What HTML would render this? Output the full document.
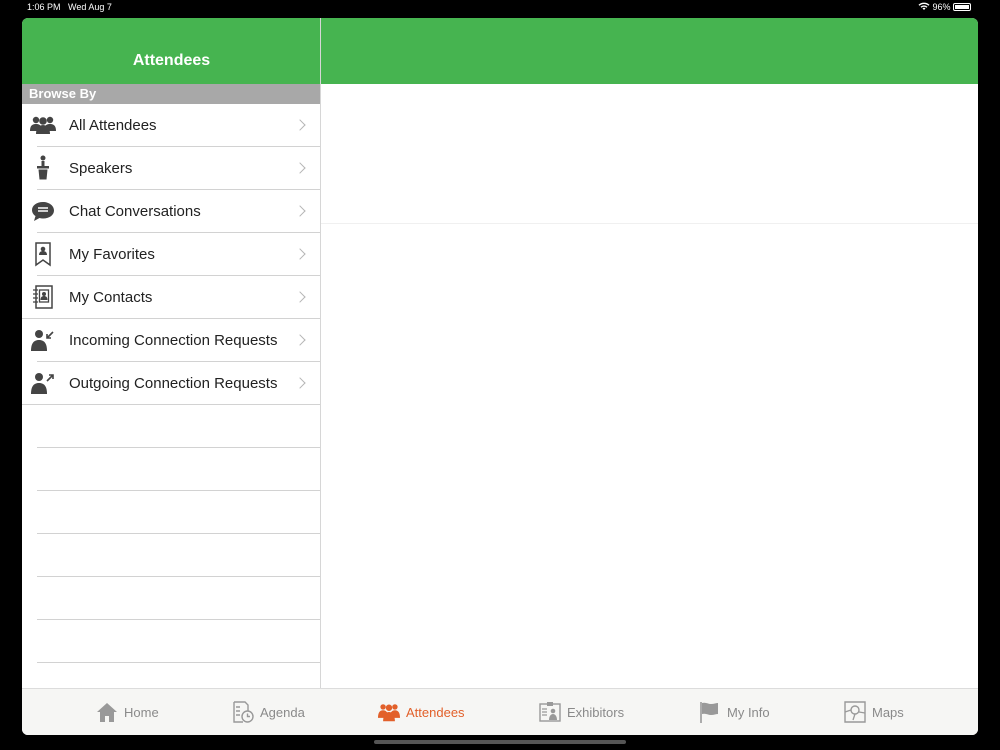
<!DOCTYPE html>
<html><head><meta charset="utf-8"><style>
*{margin:0;padding:0;box-sizing:border-box}
body{width:1000px;height:750px;background:#000;font-family:"Liberation Sans",sans-serif;position:relative;overflow:hidden}
.sb{position:absolute;top:2px;color:#fff;font-size:9px}
.frame{position:absolute;left:22px;top:18px;width:956px;height:717px;background:#fff;border-radius:6px;overflow:hidden}
.hdr{position:absolute;left:0;top:0;width:956px;height:66px;background:#46b450}
.hdr .t{position:absolute;left:0;width:299px;top:34px;text-align:center;color:#fff;font-size:16px;font-weight:bold}
.vdiv{position:absolute;left:298px;top:0;width:1px;height:670px;background:#d6d6d6}
.hvdiv{position:absolute;left:298px;top:0;width:1px;height:66px;background:#3fa048}
.browse{position:absolute;left:0;top:66px;width:298px;height:20px;background:#a8a8a8;color:#fff;font-size:13px;font-weight:bold;padding-left:7px;line-height:20px}
.row{position:absolute;left:0;width:298px;height:43px;font-size:15px;color:#222;font-weight:normal}
.row .l{position:absolute;left:47px;top:13px}
.row .ch{position:absolute;left:274px;top:17px;width:8px;height:8px;border-right:1.6px solid #b5b5b5;border-top:1.6px solid #b5b5b5;transform:rotate(45deg)}
.row .ic{position:absolute;left:8px;top:8px;width:26px;height:26px}
.sep{position:absolute;left:15px;width:283px;height:1px;background:#d2d2d2}
.tab{position:absolute;left:0;top:670px;width:956px;height:47px;background:#f6f6f4;border-top:1px solid #dcdcdc}
.ti{position:absolute;top:12px;font-size:13px;color:#8a8a8a;display:flex;align-items:center;gap:6px}
.ti svg{width:22px;height:22px}
.home{position:absolute;left:374px;top:740px;width:252px;height:4px;border-radius:2px;background:#555}
</style></head><body>
<div class="sb" style="left:27px">1:06 PM&nbsp;&nbsp; Wed Aug 7</div>
<div class="sb" style="left:918px">
<svg width="12" height="9" viewBox="0 0 12 9" style="vertical-align:-1px"><path d="M6 8l1.5-1.6a2 2 0 0 0-3 0zM2.5 4.8a5 5 0 0 1 7 0l-1 1a3.6 3.6 0 0 0-5 0zM.5 2.8a8 8 0 0 1 11 0l-1 1a6.6 6.6 0 0 0-9 0z" fill="#fff"/></svg> 96% <span style="display:inline-block;width:18px;height:8px;border:1px solid #fff;border-radius:2px;vertical-align:-1px;padding:1px"><span style="display:block;width:100%;height:100%;background:#fff"></span></span></div>
<div class="frame">
<div class="hdr"><div class="t">Attendees</div></div>
<div class="hvdiv"></div>
<div class="vdiv"></div>
<div style="position:absolute;left:299px;top:205px;width:657px;height:1px;background:#f0f0f0"></div>
<div class="browse">Browse By</div>

<div class="row" style="top:86px"><svg class="ic" viewBox="0 0 26 26"><g fill="#444"><circle cx="6" cy="8" r="3.2"/><circle cx="20" cy="8" r="3.2"/><path d="M0 19c0-5 2-7 6-7s6 2 6 7zM14 19c0-5 2-7 6-7s6 2 6 7z"/><circle cx="13" cy="9" r="3.8"/><path d="M6 22c0-6 3-9 7-9s7 3 7 9z"/></g></svg><span class="l">All Attendees</span><span class="ch"></span></div>
<div class="sep" style="top:128px"></div>
<div class="row" style="top:129px"><svg class="ic" viewBox="0 0 26 26"><g fill="#444"><circle cx="13" cy="3" r="2.5"/><rect x="11.5" y="6" width="3" height="5"/><rect x="7" y="11" width="12" height="2.5"/><path d="M8.5 14.5h9l-1 10h-7z"/></g></svg><span class="l">Speakers</span><span class="ch"></span></div>
<div class="sep" style="top:171px"></div>
<div class="row" style="top:172px"><svg class="ic" viewBox="0 0 26 26"><path d="M13 4C6.5 4 2 7.5 2 12c0 2.5 1.3 4.6 3.5 6L4 23l5.5-3c1.1.3 2.3.5 3.5.5 6.5 0 11-3.5 11-8S19.5 4 13 4z" fill="#444"/><g stroke="#fff" stroke-width="1.5"><path d="M8 10h10M8 13h10"/></g></svg><span class="l">Chat Conversations</span><span class="ch"></span></div>
<div class="sep" style="top:214px"></div>
<div class="row" style="top:215px"><svg class="ic" viewBox="0 0 26 26"><path d="M6 2h14v22l-7-5-7 5z" fill="none" stroke="#444" stroke-width="1.5"/><circle cx="13" cy="8" r="2.3" fill="#444"/><path d="M9 14c0-3 2-4 4-4s4 1 4 4z" fill="#444"/></svg><span class="l">My Favorites</span><span class="ch"></span></div>
<div class="sep" style="top:257px"></div>
<div class="row" style="top:258px"><svg class="ic" viewBox="0 0 26 26"><rect x="6" y="2" width="16" height="22" fill="none" stroke="#444" stroke-width="1.5"/><rect x="9.5" y="6" width="9" height="12" fill="none" stroke="#444" stroke-width="1.3"/><circle cx="14" cy="10" r="2" fill="#444"/><path d="M10.5 16c0-3 1.5-4 3.5-4s3.5 1 3.5 4z" fill="#444"/><path d="M3 6h5M3 10h5M3 14h5M3 18h5" stroke="#444" stroke-width="1.3"/></svg><span class="l">My Contacts</span><span class="ch"></span></div>
<div class="sep" style="top:300px;left:0;width:298px"></div>
<div class="row" style="top:301px"><svg class="ic" viewBox="0 0 26 26"><circle cx="9" cy="7" r="4" fill="#444"/><path d="M1 24c0-8 3-11 8-11s8 3 8 11z" fill="#444"/><path d="M23 5l-6 6M17 7v4h4" stroke="#444" stroke-width="1.6" fill="none"/></svg><span class="l">Incoming Connection Requests</span><span class="ch"></span></div>
<div class="sep" style="top:343px"></div>
<div class="row" style="top:344px"><svg class="ic" viewBox="0 0 26 26"><circle cx="9" cy="7" r="4" fill="#444"/><path d="M1 24c0-8 3-11 8-11s8 3 8 11z" fill="#444"/><path d="M17 11l6-6M19 5h4v4" stroke="#444" stroke-width="1.6" fill="none"/></svg><span class="l">Outgoing Connection Requests</span><span class="ch"></span></div>
<div class="sep" style="top:386px;left:0;width:298px"></div>
<div class="sep" style="top:429px"></div>
<div class="sep" style="top:472px"></div>
<div class="sep" style="top:515px"></div>
<div class="sep" style="top:558px"></div>
<div class="sep" style="top:601px"></div>
<div class="sep" style="top:644px"></div>

<div class="tab">
<div class="ti" style="left:74px"><svg viewBox="0 0 22 22"><path d="M11 2L1 11h3v10h5v-6h4v6h5V11h3z" fill="#999"/></svg>Home</div>
<div class="ti" style="left:210px"><svg viewBox="0 0 22 22"><path d="M2 1h11l3 3v6M2 1v20h9" fill="none" stroke="#999" stroke-width="1.4"/><path d="M4 6h4M4 10h4M4 14h4" stroke="#999" stroke-width="1.4"/><circle cx="15.5" cy="15.5" r="5.5" fill="none" stroke="#999" stroke-width="1.4"/><path d="M15.5 12.5v3h2.5" stroke="#999" stroke-width="1.4" fill="none"/></svg>Agenda</div>
<div class="ti" style="left:356px;color:#e2602a"><svg viewBox="0 0 26 26"><g fill="#e2602a"><circle cx="6" cy="7" r="3.2"/><circle cx="20" cy="7" r="3.2"/><path d="M0 20c0-6 2-9 6-9s6 3 6 9zM14 20c0-6 2-9 6-9s6 3 6 9z"/><circle cx="13" cy="8" r="3.8"/><path d="M6 24c0-7 3-11 7-11s7 4 7 11z"/></g></svg>Attendees</div>
<div class="ti" style="left:517px"><svg viewBox="0 0 22 22"><rect x="1" y="3" width="20" height="17" fill="none" stroke="#999" stroke-width="1.4"/><rect x="8" y="1" width="6" height="4" fill="#999"/><path d="M3 8h5M3 11h5M3 14h5" stroke="#999" stroke-width="1.3"/><circle cx="14" cy="10" r="2.3" fill="#999"/><path d="M10 19c0-4 2-6 4-6s4 2 4 6z" fill="#999"/></svg>Exhibitors</div>
<div class="ti" style="left:677px"><svg viewBox="0 0 22 22"><path d="M2 1v21" stroke="#999" stroke-width="1.6"/><path d="M3 2c4-1 6 1 9 1s5-1 7-1v11c-2 0-4 1-7 1s-5-2-9-1z" fill="#999"/></svg>My Info</div>
<div class="ti" style="left:822px"><svg viewBox="0 0 22 22"><path d="M1 1h20v20H1z" fill="none" stroke="#999" stroke-width="1.4"/><circle cx="11" cy="9" r="4" fill="none" stroke="#999" stroke-width="1.4"/><path d="M11 13l-2 6M1 11l6-2M21 12l-6-1" stroke="#999" stroke-width="1.3"/></svg>Maps</div>
</div>
</div>
<div class="home"></div>
</body></html>
